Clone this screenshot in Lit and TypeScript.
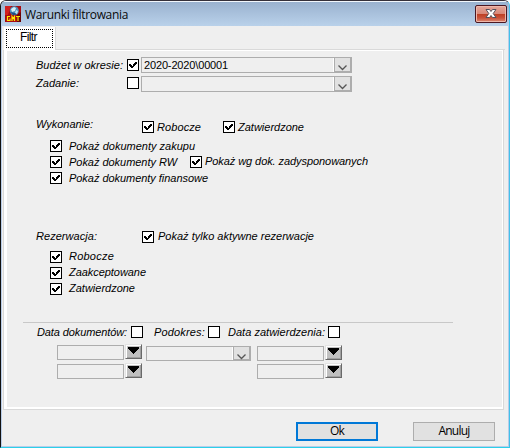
import { LitElement, html, css, svg } from "lit";
import { customElement, property } from "lit/decorators.js";

/** A single line of text whose tracking is adjusted to fill a given width. */
@customElement("fit-label")
class FitLabel extends LitElement {
  @property() text = "";
  @property({ type: Number }) w = 0;

  static styles = css`
    :host { display: block; flex: none; height: 12px; line-height: 12px; white-space: pre; }
    span { display: inline-block; height: 12px; vertical-align: top; }
  `;

  updated() {
    const span = this.renderRoot.querySelector("span") as HTMLElement;
    span.style.letterSpacing = "0px";
    const natural = span.getBoundingClientRect().width;
    span.style.letterSpacing = `${(this.w - natural) / this.text.length}px`;
    this.style.width = `${this.w}px`;
  }

  render() {
    return html`<span>${this.text}</span>`;
  }
}

@customElement("check-box")
class CheckBox extends LitElement {
  @property({ type: Boolean }) checked = false;

  static styles = css`
    :host { display: block; flex: none; box-sizing: border-box; width: 12px; height: 12px; border: 1px solid #000; background: #fff; }
    svg { display: block; }
  `;

  render() {
    return html`${this.checked
      ? html`<svg width="10" height="10" shape-rendering="crispEdges">
          <path d="M7 2h2v1H7zM6 3h3v1H6zM1 4h2v1H1zM5 4h3v1H5zM1 5h3v1H1zM5 5h2v1H5zM2 6h4v1H2zM3 7h2v1H3z" />
        </svg>`
      : ""}`;
  }
}

@customElement("combo-box")
class ComboBox extends LitElement {
  @property() value = "";

  static styles = css`
    :host { display: flex; flex: none; box-sizing: border-box; border: 1px solid #adadad; background: #efefef; justify-content: space-between; }
    .drop { box-sizing: border-box; width: 17px; border: solid #adadad; border-width: 0 1px 1px 1px; background: #e1e1e1; box-shadow: -1px 0 #fff; }
    svg { display: block; }
    fit-label { margin: 1px 0 0 2px; }
  `;

  render() {
    return html`
      ${this.value ? html`<fit-label .text=${this.value} .w=${84}></fit-label>` : html`<i></i>`}
      <div class="drop">
        <svg width="15" height="13"><path d="M3.5 7.5l4 4 4-4" fill="none" stroke="#555" stroke-width="1.3" /></svg>
      </div>
    `;
  }
}

/** Date entry: a flat field with a raised drop-down button. */
@customElement("date-field")
class DateField extends LitElement {
  static styles = css`
    :host { display: flex; flex: none; height: 16px; gap: 1px; }
    .field { box-sizing: border-box; flex: none; width: 67px; height: 15px; margin-top: 1px; border: 1px solid #adadad; background: #efefef; }
    .btn { box-sizing: border-box; flex: none; width: 17px; height: 15px; border: 1px solid; border-color: #e3e3e3 #696969 #696969 #e3e3e3; background: #c0c0c0; box-shadow: inset 1px 1px #fff, inset -1px -1px #a0a0a0; }
    svg { display: block; }
  `;

  render() {
    return html`
      <div class="field"></div>
      <div class="btn">
        <svg width="15" height="13" shape-rendering="crispEdges"><path d="M2 2h11v2h-1v1h-1v1h-1v1H9v1H8v1H7V8H6V7H5V6H4V5H3V4H2z" /></svg>
      </div>
    `;
  }
}

@customElement("app-root")
class AppRoot extends LitElement {
  static styles = css`
    :host { display: block; font: 11px "Liberation Sans", Arial, sans-serif; color: #000; }
    .window { box-sizing: border-box; width: 510px; height: 448px; display: flex; flex-direction: column; background: #efefef; border: 1px solid; border-color: #35303a #42c0ea #2bd0ea #111; border-radius: 6px 6px 0 0; box-shadow: inset 0 0 0 1px #b9cde8; overflow: hidden; }
    .title { display: flex; height: 25px; box-sizing: border-box; border-top: 1px solid #f2f7fc; background: linear-gradient(#9ab2cf, #b9d1ea); padding: 4px 2px 0 4px; }
    .title svg { display: block; flex: none; }
    .title fit-label { margin: 0 0 0 4px; font: 12px "Open Sans", "Noto Sans", sans-serif; color: #0a0a0a; }
    .close { margin: -1px 0 0 auto; box-sizing: border-box; width: 32px; height: 18px; border: 1px solid #4b1722; border-radius: 2px; background: linear-gradient(#e4a79b 0, #d98878 48%, #bd3e22 50%, #c9533b 75%, #dc8a74 100%); box-shadow: inset 0 0 0 1px #eeb7aa; }
    .tabs { display: flex; height: 23px; margin: 1px 0 0 3px; }
    .tab { box-sizing: border-box; width: 52px; height: 23px; background: #fff; border-right: 1px solid #d9d9d9; padding: 2px 2px 0; }
    .focus { box-sizing: border-box; width: 47px; height: 19px; border: 1px dotted #000; padding: 1px 0 0 13px; }
    .focus fit-label { font-size: 12px; }
    .rest { flex: 1; border-bottom: 1px solid #d9d9d9; margin-right: 4px; }
    .panel { box-sizing: border-box; margin: 0 5px 0 2px; width: 501px; height: 360px; border: 1px solid #d9d9d9; border-top: 0; }
    .inner { box-sizing: border-box; height: 359px; border: solid #fff; border-width: 1px 1px 2px 3px; }
    .form { font-style: italic; padding: 6px 0 0 29px; }
    .row { display: flex; align-items: flex-start; }
    combo-box { font-style: normal; width: 211px; height: 16px; }
    .l1 { margin-top: 2px; }
    .l2 { margin-top: 1px; }
    .period { height: 19px; }
    .period .cap { width: 91px; }
    .period combo-box { margin-left: 2px; }
    .period check-box { margin-top: 2px; }
    .second { height: 45px; }
    .second check-box { margin-top: 1px; }
    .group { height: 19px; }
    .group .cap { width: 106px; margin-top: -3px; }
    .items { padding-left: 14px; }
    .items .row { height: 16px; }
    .items check-box + fit-label { margin-left: 7px; }
    .items .side { margin-left: 13px; }
    .items .side + fit-label { margin: -1px 0 0 3px; }
    .raised fit-label { margin-top: -1px; }
    .gapA { margin-left: 3px; }
    .gapB { margin-left: 4px; }
    .gapC { margin-left: 22px; }
    .gapD { margin-left: 11px; }
    .gapE { margin-left: 8px; }
    .second-group { margin-top: 43px; height: 20px; }
    .second-group .cap { width: 106px; }
    .rule { width: 430px; height: 1px; background: #c8c8c8; margin: 23px 0 3px -13px; }
    .heads { padding-left: 1px; height: 18px; }
    .heads .l2 { margin-top: 0; }
    .dates { display: grid; grid-template-columns: 85px 105px 85px; padding-left: 21px; }
    .dates .mid { width: 105px; height: 15px; margin: 2px 0 0 4px; }
    .col { display: flex; flex-direction: column; gap: 3px; }
    .dates .last { margin: 1px 0 0 10px; gap: 2px; }
    .foot { display: flex; justify-content: flex-end; gap: 35px; padding: 12px 14px 0 0; }
    .push { box-sizing: border-box; width: 82px; height: 19px; border: 1px solid #adadad; background: #e1e1e1; display: flex; justify-content: center; padding-top: 2px; font: 12px "Open Sans", "Noto Sans", sans-serif; }
    .push.main { border: 2px solid #0078d7; padding-top: 1px; }
  `;

  private item(text: string, w: number, extra: unknown = "") {
    return html`<div class="row"><check-box checked></check-box><fit-label .text=${text} .w=${w}></fit-label>${extra}</div>`;
  }

  private logo() {
    return html`
      <svg width="16" height="16" viewBox="0 0 16 16">
        ${svg`
        <rect width="16" height="16" fill="#a70b10" />
        <path d="M0 0h6L3 9H0z" fill="#d12020" />
        <path d="M12 9l4-3v10h-4z" fill="#6a0508" />
        <circle cx="9.3" cy="4.8" r="4.5" fill="#4d91bd" />
        <path d="M6 3l3-2 2 1-1 3-3 1z" fill="#d8f0f7" />
        <path d="M11 4l2 1-1 3-2-1z" fill="#bce3ee" />
        <path d="M5 6l3 3 4 0-2-2z" fill="#214c83" />
        <path d="M5 10.5H2.500v4H5v-2M7 15v-4.5l1.2 2 1.3-2V15M11 10.5h4M13 10.5V15" fill="none" stroke="#ffe800" stroke-width="1.2" />`}
      </svg>`;
  }

  render() {
    return html`
      <div class="window">
        <div class="title">
          ${this.logo()}
          <fit-label .text=${"Warunki filtrowania"} .w=${103}></fit-label>
          <div class="close">
            <svg width="30" height="16">
              <path d="M10 3.5h3.500l1.5 2 1.5-2H20L17.2 7.5l2.8 4h-3.5l-1.5-2-1.5 2H10l2.8-4z" fill="#fff" stroke="#53515c" />
            </svg>
          </div>
        </div>
        <div class="tabs">
          <div class="tab"><div class="focus"><fit-label .text=${"Filtr"} .w=${17}></fit-label></div></div>
          <div class="rest"></div>
        </div>
        <div class="panel"><div class="inner"><div class="form">
          <div class="row period">
            <div class="cap l1"><fit-label .text=${"Budżet w okresie:"} .w=${87}></fit-label></div>
            <check-box checked></check-box>
            <combo-box value="2020-2020\\00001"></combo-box>
          </div>
          <div class="row period second">
            <div class="cap l2"><fit-label .text=${"Zadanie:"} .w=${43}></fit-label></div>
            <check-box></check-box>
            <combo-box></combo-box>
          </div>
          <div class="row group">
            <div class="cap"><fit-label .text=${"Wykonanie:"} .w=${57}></fit-label></div>
            <check-box checked></check-box>
            <fit-label class="gapA" .text=${"Robocze"} .w=${44}></fit-label>
            <check-box class="gapC" checked></check-box>
            <fit-label class="gapA" .text=${"Zatwierdzone"} .w=${66}></fit-label>
          </div>
          <div class="items">
            ${this.item("Pokaż dokumenty zakupu", 126)}
            ${this.item("Pokaż dokumenty RW", 108, html`<check-box class="side" checked></check-box><fit-label .text=${"Pokaż wg dok. zadysponowanych"} .w=${163}></fit-label>`)}
            ${this.item("Pokaż dokumenty finansowe", 139)}
          </div>
          <div class="row second-group raised">
            <div class="cap"><fit-label .text=${"Rezerwacja:"} .w=${61}></fit-label></div>
            <check-box checked></check-box>
            <fit-label class="gapB" .text=${"Pokaż tylko aktywne rezerwacje"} .w=${156}></fit-label>
          </div>
          <div class="items raised">
            ${this.item("Robocze", 45)}
            ${this.item("Zaakceptowane", 77)}
            ${this.item("Zatwierdzone", 66)}
          </div>
          <div class="rule"></div>
          <div class="row heads">
            <fit-label class="l2" .text=${"Data dokumentów:"} .w=${90}></fit-label>
            <check-box class="gapB"></check-box>
            <fit-label class="l2 gapD" .text=${"Podokres:"} .w=${51}></fit-label>
            <check-box class="gapA"></check-box>
            <fit-label class="l2 gapE" .text=${"Data zatwierdzenia:"} .w=${97}></fit-label>
            <check-box class="gapA"></check-box>
          </div>
          <div class="dates">
            <div class="col"><date-field></date-field><date-field></date-field></div>
            <combo-box class="mid"></combo-box>
            <div class="col last"><date-field></date-field><date-field></date-field></div>
          </div>
        </div></div></div>
        <div class="foot">
          <div class="push main"><fit-label .text=${"Ok"} .w=${14}></fit-label></div>
          <div class="push"><fit-label .text=${"Anuluj"} .w=${31}></fit-label></div>
        </div>
      </div>
    `;
  }
}
